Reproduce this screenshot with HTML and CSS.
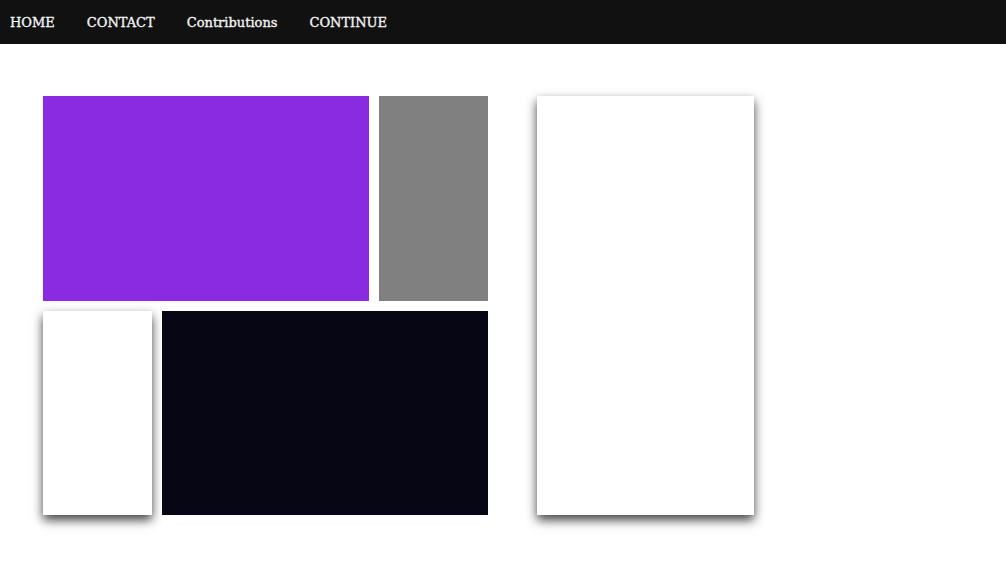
FILE: index.html
```html
<!DOCTYPE html>
<html>
<head>
<meta charset="utf-8">
<link rel="stylesheet" href="styles.css">
</head>
<body>
<nav class="nav">
  <a class="nav-link" href="#">HOME</a>
  <a class="nav-link" href="#">CONTACT</a>
  <a class="nav-link" href="#">Contributions</a>
  <a class="nav-link" href="#">CONTINUE</a>
</nav>
<main class="main">
  <section class="grid">
    <div class="tile purple"></div>
    <div class="tile gray"></div>
    <div class="tile white shadow"></div>
    <div class="tile dark"></div>
  </section>
  <aside class="side shadow"></aside>
</main>
</body>
</html>
```
FILE: styles.css
```css
html, body {
  margin: 0;
  padding: 0;
  background: #fff;
}
body {
  font-family: "DejaVu Serif", serif;
}
.nav {
  height: 44px;
  background: #111111;
  display: flex;
  align-items: center;
  padding-left: 10px;
  gap: 32px;
}
.nav-link {
  color: #f4f4f4;
  text-decoration: none;
  font-size: 13px;
  line-height: 1;
  padding-top: 1px;
  -webkit-text-stroke: 0.35px #f4f4f4;
}
.main {
  display: flex;
  align-items: flex-start;
  padding: 52px 0 40px 43px;
  gap: 49px;
}
.grid {
  display: grid;
  grid-template-columns: 109px 207px 109px;
  grid-template-rows: 205px 204px;
  gap: 10px;
}
.purple {
  grid-column: 1 / 3;
  background: #8a2be2;
}
.gray {
  background: #808080;
}
.white {
  background: #fff;
}
.dark {
  grid-column: 2 / 4;
  background: #070614;
}
.side {
  width: 217px;
  height: 419px;
  background: #fff;
}
.shadow {
  box-shadow: 0 5px 10px rgba(0, 0, 0, 0.75);
}
```
